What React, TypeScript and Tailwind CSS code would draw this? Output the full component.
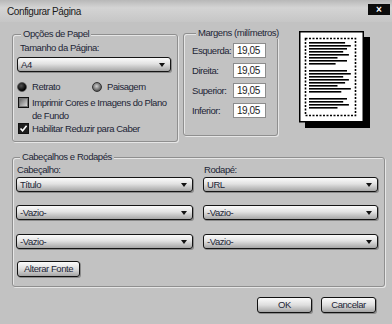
import type { ReactNode } from "react";

const font = { fontFamily: '"Liberation Sans", Arial, sans-serif' };

function Group({
  title,
  className,
  children,
}: {
  title: string;
  className: string;
  children: ReactNode;
}) {
  return (
    <div
      className={`flex flex-col rounded-[3px] border border-[#8f8f8f] shadow-[1px_1px_0_#e6e6e6,inset_1px_1px_0_#e6e6e6] ${className}`}
    >
      <span className="-mt-[7px] ml-[4px] w-fit whitespace-nowrap bg-[#c2c2c2] px-[2px] leading-[12px]">
        {title}
      </span>
      {children}
    </div>
  );
}

function Select({ value, className }: { value: string; className: string }) {
  return (
    <div
      className={`flex h-[15px] items-center justify-between rounded-[3px] border border-[#151515] bg-[linear-gradient(to_bottom,#fbfbfb,#e2e2e2_45%,#a6a6a6)] pl-[3px] pr-[5px] shadow-[1px_1px_0_#8a8a8a] ${className}`}
    >
      <span className="leading-[13px]">{value}</span>
      <span className="h-0 w-0 border-x-[3px] border-t-[4px] border-x-transparent border-t-[#111]" />
    </div>
  );
}

function Btn({ label, className }: { label: string; className: string }) {
  return (
    <div
      className={`flex h-[16px] items-center justify-center rounded-[3px] border-[1.5px] border-[#111] bg-[linear-gradient(to_bottom,#fbfbfb,#dedede_50%,#a4a4a4)] shadow-[1px_1px_0_#8a8a8a] leading-[12px] ${className}`}
    >
      {label}
    </div>
  );
}

function MarginRow({ label }: { label: string }) {
  return (
    <div className="flex h-[15px] items-center">
      <span className="w-[41px] leading-[12px]">{label}</span>
      <div className="flex h-[15px] w-[33px] items-center border border-[#8c8c8c] bg-white pl-[3px] text-[10px] leading-[12px] text-[#222]">
        19,05
      </div>
    </div>
  );
}

const paragraphs = [
  [38, 44, 40, 36, 42, 30, 40, 28],
  [40, 44, 36, 42, 38, 30, 44, 34],
  [40, 36, 42, 30],
];

function Preview() {
  let y = 11;
  const lines: { y: number; w: number }[] = [];
  paragraphs.forEach((p) => {
    p.forEach((w) => {
      lines.push({ y, w });
      y += 3;
    });
    y += 4;
  });
  return (
    <svg width="72" height="98" viewBox="0 0 72 98" className="block">
      <rect x="6" y="6" width="65" height="91" fill="#000" />
      <rect x="0.75" y="0.75" width="63.5" height="90" fill="#fff" stroke="#000" strokeWidth="1.5" />
      <rect
        x="6.5"
        y="7.5"
        width="50"
        height="77"
        fill="none"
        stroke="#000"
        strokeWidth="1.6"
        strokeDasharray="2 1.5"
      />
      {lines.map((l, i) => (
        <rect key={i} x="10" y={l.y} width={l.w * 0.95} height="1.6" fill="#000" />
      ))}
    </svg>
  );
}

export default function App() {
  return (
    <div
      style={font}
      className="flex h-[324px] w-[392px] flex-col overflow-hidden bg-[#c2c2c2] text-[9.5px] tracking-[-0.45px] text-[#1d2536]"
    >
      <div className="flex h-[22px] shrink-0 items-start justify-between bg-[linear-gradient(to_bottom,#b8b8b8,#d4d4d4_35%,#c6c6c6)] pl-[7px] pr-[2px]">
        <span className="mt-[5px] text-[10px] leading-[13px] tracking-[-0.4px] text-[#1a1a1a]">
          Configurar Página
        </span>
        <div className="mt-[4px] flex h-[11px] w-[22px] items-center justify-center bg-[#0c0c0c] text-[10px] font-bold leading-none tracking-normal text-white">
          ×
        </div>
      </div>

      <div className="mt-[12px] flex items-start pl-[12px]">
        <Group title="Opções de Papel" className="h-[108px] w-[166px] px-[4px]">
          <span className="ml-[3px] mt-[2px] leading-[12px]">Tamanho da Página:</span>
          <Select value="A4" className="mt-[3px] w-[154px]" />
          <div className="mt-[9px] flex h-[12px] items-center">
            <span className="h-[10px] w-[10px] rounded-full border border-[#555] bg-[radial-gradient(circle_at_40%_35%,#555,#000_70%)]" />
            <span className="ml-[5px] w-[60px] leading-[12px]">Retrato</span>
            <span className="h-[10px] w-[10px] rounded-full border border-[#333] bg-[radial-gradient(circle_at_45%_40%,#d0d0d0,#6a6a6a_60%,#222)]" />
            <span className="ml-[5px] leading-[12px]">Paisagem</span>
          </div>
          <div className="ml-[1px] mt-[3px] flex items-start">
            <span className="mt-[1px] h-[11px] w-[11px] shrink-0 border border-[#111] bg-[linear-gradient(135deg,#5a5a5a,#e8e8e8)] shadow-[inset_0_0_0_1px_#777]" />
            <span className="ml-[3px] leading-[13px]">
              Imprimir Cores e Imagens do Plano
              <br />
              de Fundo
            </span>
          </div>
          <div className="ml-[1px] flex h-[13px] items-center">
            <span className="flex h-[11px] w-[11px] shrink-0 items-center justify-center border border-[#111] bg-[#1e1e1e]">
              <svg width="9" height="9" viewBox="0 0 9 9">
                <path d="M1.5 4.5 L3.6 6.8 L7.6 1.8" fill="none" stroke="#fff" strokeWidth="1.6" />
              </svg>
            </span>
            <span className="ml-[3px] leading-[13px]">Habilitar Reduzir para Caber</span>
          </div>
        </Group>

        <Group title="Margens (milímetros)" className="-mt-[1px] ml-[5px] h-[103px] w-[95px] pl-[8px]">
          <div className="mt-[4px] flex flex-col gap-[5px]">
            <MarginRow label="Esquerda:" />
            <MarginRow label="Direita:" />
            <MarginRow label="Superior:" />
            <MarginRow label="Inferior:" />
          </div>
        </Group>

        <div className="-mt-[3px] ml-[21px]">
          <Preview />
        </div>
      </div>

      <Group title="Cabeçalhos e Rodapés" className="ml-[12px] mt-[15px] h-[130px] w-[373px] px-[3px]">
        <div className="mt-[1px] flex gap-[10px]">
          <div className="flex w-[177px] flex-col">
            <span className="ml-[1px] leading-[12px]">Cabeçalho:</span>
            <Select value="Título" className="mt-[1px]" />
            <Select value="-Vazio-" className="mt-[13px]" />
            <Select value="-Vazio-" className="mt-[14px]" />
          </div>
          <div className="flex w-[175px] flex-col">
            <span className="ml-[1px] leading-[12px]">Rodapé:</span>
            <Select value="URL" className="mt-[1px]" />
            <Select value="-Vazio-" className="mt-[13px]" />
            <Select value="-Vazio-" className="mt-[14px]" />
          </div>
        </div>
        <Btn label="Alterar Fonte" className="ml-[1px] mt-[12px] w-[63px]" />
      </Group>

      <div className="mt-[10px] flex justify-end gap-[9px] pr-[16px]">
        <Btn label="OK" className="w-[55px]" />
        <Btn label="Cancelar" className="w-[55px]" />
      </div>
    </div>
  );
}
